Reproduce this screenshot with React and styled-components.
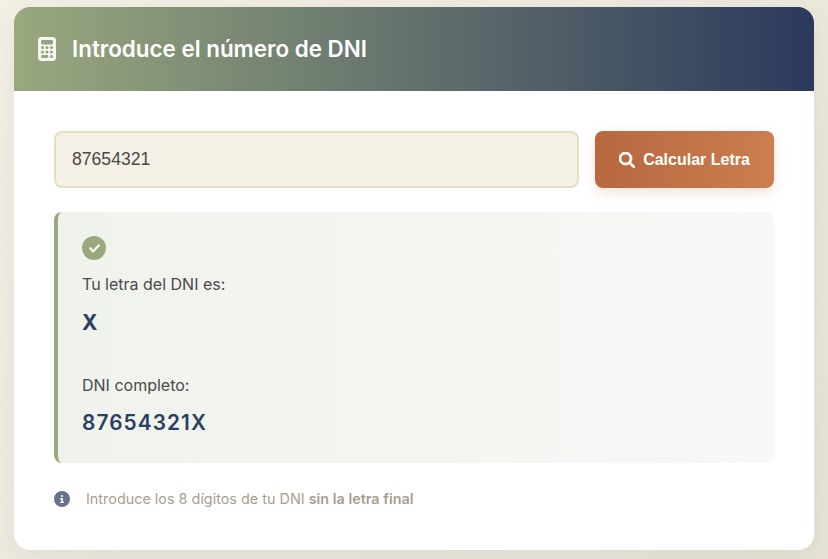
import React from "react";
import styled, { createGlobalStyle } from "styled-components";
import { FaCalculator, FaMagnifyingGlass, FaCircleInfo } from "react-icons/fa6";
import { FaCheck } from "react-icons/fa";

const colors = {
    sage: '#9AA87E',
    navy: '#2B3A5C',
    valueBlue: '#2C3E63',
    terracotta: '#B8673F',
    copper: '#CB7E50',
    cream: '#F5F0E6',
    sand: '#E8DCC4',
    text: '#4A4A4A',
    muted: '#A89F91',
};

const GlobalStyle = createGlobalStyle`
    html, body {
        margin: 0;
        padding: 0;
        height: 100%;
    }
    body {
        background: linear-gradient(135deg, #F5F0E6 0%, #E8E3D6 100%);
        font-family: Inter, "Liberation Sans", sans-serif;
        overflow: hidden;
    }
`;
const Page = styled.div`
    padding: 7px 14px;
`;
const Card = styled.div`
    width: 800px;
    height: 543px;
    background: #FFFFFF;
    border-radius: 16px;
    overflow: hidden;
    box-shadow: 0 8px 32px rgba(44, 62, 95, 0.08);
`;
const Header = styled.div`
    display: flex;
    align-items: center;
    gap: 15px;
    height: 84px;
    padding: 0 23px;
    box-sizing: border-box;
    color: #FFFFFF;
    background: linear-gradient(90deg, ${colors.sage} 0%, ${colors.navy} 100%);
    svg {
        width: 20px;
        height: 24px;
        opacity: 0.9;
    }
`;
const Title = styled.h1`
    margin: 0;
    font-size: 22.4px;
    line-height: 28px;
    font-weight: 600;
`;
const Body = styled.div`
    padding: 40px;
`;
const InputRow = styled.div`
    display: flex;
    gap: 16px;
    margin-bottom: 24px;
`;
const DniInput = styled.input`
    flex: 1;
    min-width: 0;
    height: 57px;
    box-sizing: border-box;
    padding: 0 16px;
    font-family: "Liberation Sans", sans-serif;
    font-size: 17.6px;
    color: ${colors.text};
    background: ${colors.cream};
    border: 2px solid ${colors.sand};
    border-radius: 8px;
    outline: none;
`;
const CalcButton = styled.button`
    display: flex;
    align-items: center;
    justify-content: center;
    gap: 8px;
    width: 179px;
    height: 57px;
    padding: 0;
    font-family: "Liberation Sans", sans-serif;
    font-size: 16px;
    font-weight: 700;
    color: #FFFFFF;
    background: linear-gradient(90deg, ${colors.terracotta} 0%, ${colors.copper} 100%);
    border: none;
    border-radius: 8px;
    box-shadow: 0 4px 12px rgba(184, 103, 63, 0.2);
    svg {
        width: 16px;
        height: 16px;
        stroke: currentColor;
        stroke-width: 24;
    }
`;
const Result = styled.div`
    height: 251px;
    box-sizing: border-box;
    padding: 24px;
    background: linear-gradient(90deg, #F0F2EC 0%, #F8F8F6 100%);
    border-left: 4px solid ${colors.sage};
    border-radius: 8px;
`;
const CheckBadge = styled.div`
    display: flex;
    align-items: center;
    justify-content: center;
    width: 24px;
    height: 24px;
    margin-bottom: 12px;
    color: #FFFFFF;
    background: ${colors.sage};
    border-radius: 50%;
    svg {
        width: 11px;
        height: 11px;
    }
`;
const Label = styled.p`
    margin: 0 0 ${props => props.$gap || 11}px;
    font-size: 16px;
    line-height: 24px;
    color: ${colors.text};
`;
const Value = styled.div`
    font-size: 20.8px;
    line-height: 31px;
    font-weight: ${props => props.$spaced ? 600 : 700};
    color: ${colors.valueBlue};
    letter-spacing: ${props => props.$spaced ? '1.1px' : '0'};
    margin-bottom: ${props => props.$gap || 0}px;
`;
const Hint = styled.div`
    display: flex;
    align-items: center;
    gap: 16px;
    margin-top: 27px;
    font-size: 14.4px;
    line-height: 18px;
    color: ${colors.muted};
    svg {
        width: 16px;
        height: 16px;
        color: #66718C;
    }
    strong {
        font-weight: 600;
    }
`;

function App() {
    return (
        <Page>
            <GlobalStyle />
            <Card>
                <Header>
                    <FaCalculator />
                    <Title>Introduce el número de DNI</Title>
                </Header>
                <Body>
                    <InputRow>
                        <DniInput defaultValue="87654321" />
                        <CalcButton><FaMagnifyingGlass />Calcular Letra</CalcButton>
                    </InputRow>
                    <Result>
                        <CheckBadge><FaCheck /></CheckBadge>
                        <Label>Tu letra del DNI es:</Label>
                        <Value $gap={35}>X</Value>
                        <Label $gap={10}>DNI completo:</Label>
                        <Value $spaced>87654321X</Value>
                    </Result>
                    <Hint>
                        <FaCircleInfo />
                        <span>Introduce los 8 dígitos de tu DNI <strong>sin la letra final</strong></span>
                    </Hint>
                </Body>
            </Card>
        </Page>
    );
}

export default App;
